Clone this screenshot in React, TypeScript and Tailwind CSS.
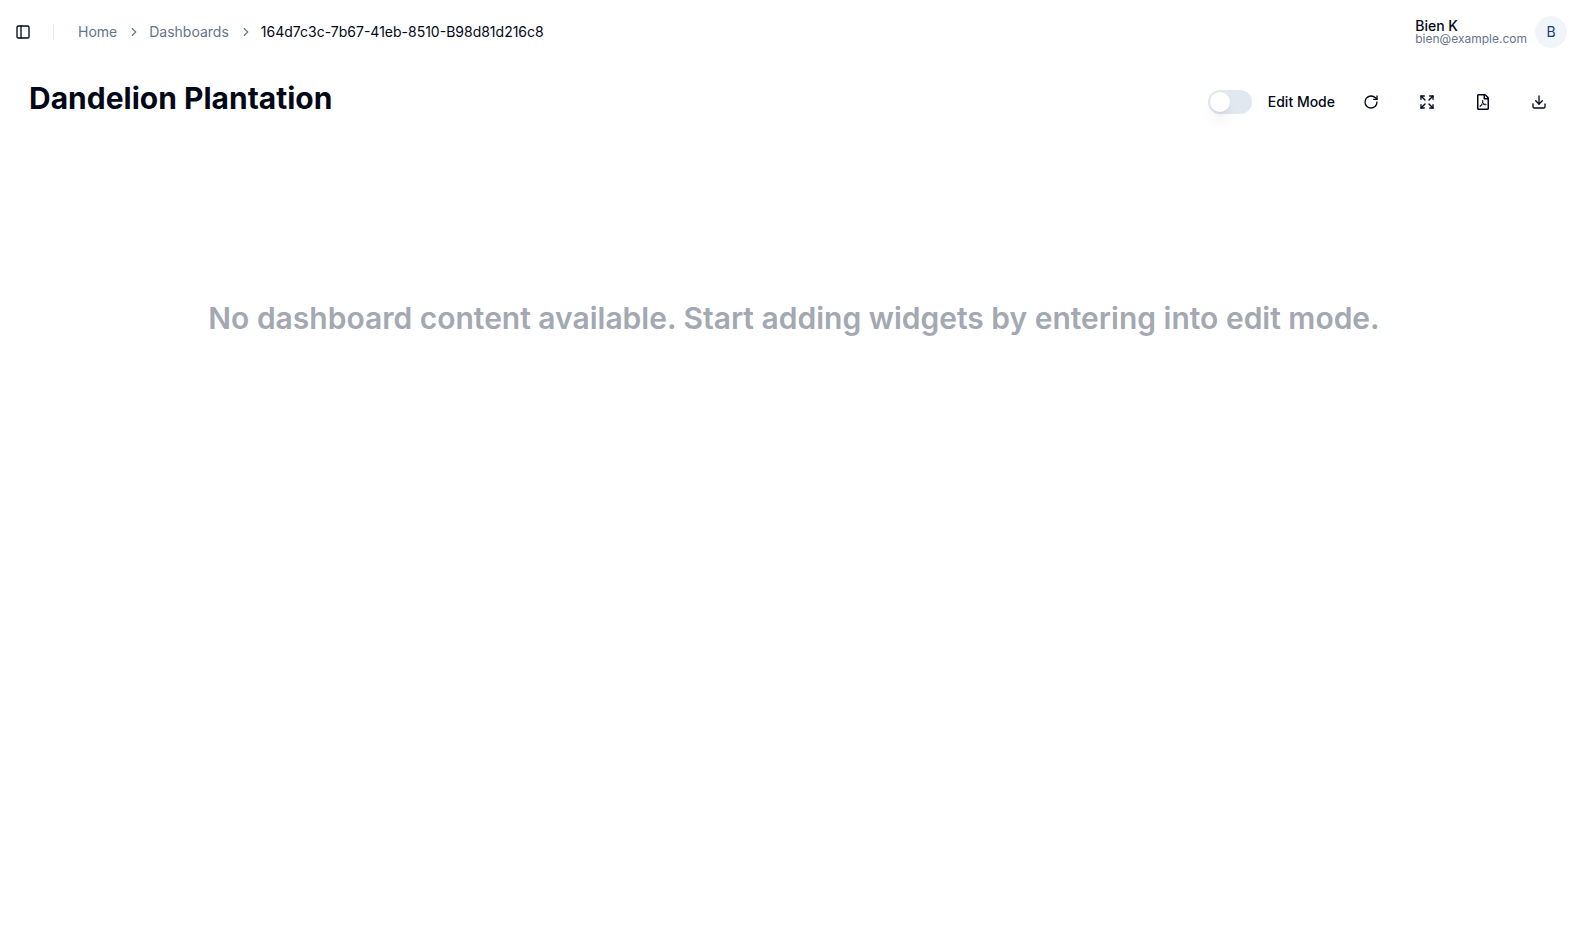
import { ChevronRight, Download, Expand, PanelLeft, RotateCw } from "lucide-react";
import { FaRegFilePdf } from "react-icons/fa";

export default function App() {
  return (
    <div className="flex h-screen flex-col bg-white font-['Inter',sans-serif] text-[#020817]">
      <header className="flex h-16 shrink-0 items-center justify-between pr-6 pl-4">
        <div className="flex items-center">
          <button className="-ml-[7px] flex size-7 items-center justify-center"><PanelLeft size={16} /></button>
          <div className="mr-6 ml-4 h-4 w-px bg-[#e2e8f0]" />
          <nav className="flex items-center text-sm text-[#64748b]">
            <span>Home</span>
            <ChevronRight className="mr-2 ml-2.5" size={14} />
            <span>Dashboards</span>
            <ChevronRight className="mr-2 ml-2.5" size={14} />
            <span className="text-[#020817]">164d7c3c-7b67-41eb-8510-B98d81d216c8</span>
          </nav>
        </div>
        <div className="flex items-center gap-2">
          <div className="flex flex-col">
            <span className="text-sm leading-[14px] font-medium">Bien K</span>
            <span className="text-xs leading-3 text-[#64748b]">bien@example.com</span>
          </div>
          <div className="flex size-8 items-center justify-center rounded-full bg-[#f1f5f9] text-sm text-[#0f3c81]">B</div>
        </div>
      </header>
      <main className="flex flex-col">
        <div className="flex items-start justify-between pt-4 pr-8 pl-[29px]">
          <h1 className="text-3xl font-bold">Dandelion Plantation</h1>
          <div className="flex h-11 items-center">
            <button className="flex h-6 w-11 items-center rounded-full bg-[#e2e8f0] p-0.5">
              <span className="size-5 rounded-full bg-white shadow-lg" />
            </button>
            <span className="mr-4 ml-4 text-sm font-medium">Edit Mode</span>
            <div className="flex gap-4">
              <button className="flex size-10 items-center justify-center"><RotateCw size={16} /></button>
              <button className="flex size-10 items-center justify-center"><Expand size={16} /></button>
              <button className="flex size-10 items-center justify-center"><FaRegFilePdf size={16} /></button>
              <button className="flex size-10 items-center justify-center"><Download size={16} /></button>
            </div>
          </div>
        </div>
        <p className="mt-[176px] pr-[3px] text-center text-3xl font-semibold text-[#a3a8b2]">
          No dashboard content available. Start adding widgets by entering into edit mode.
        </p>
      </main>
    </div>
  );
}
